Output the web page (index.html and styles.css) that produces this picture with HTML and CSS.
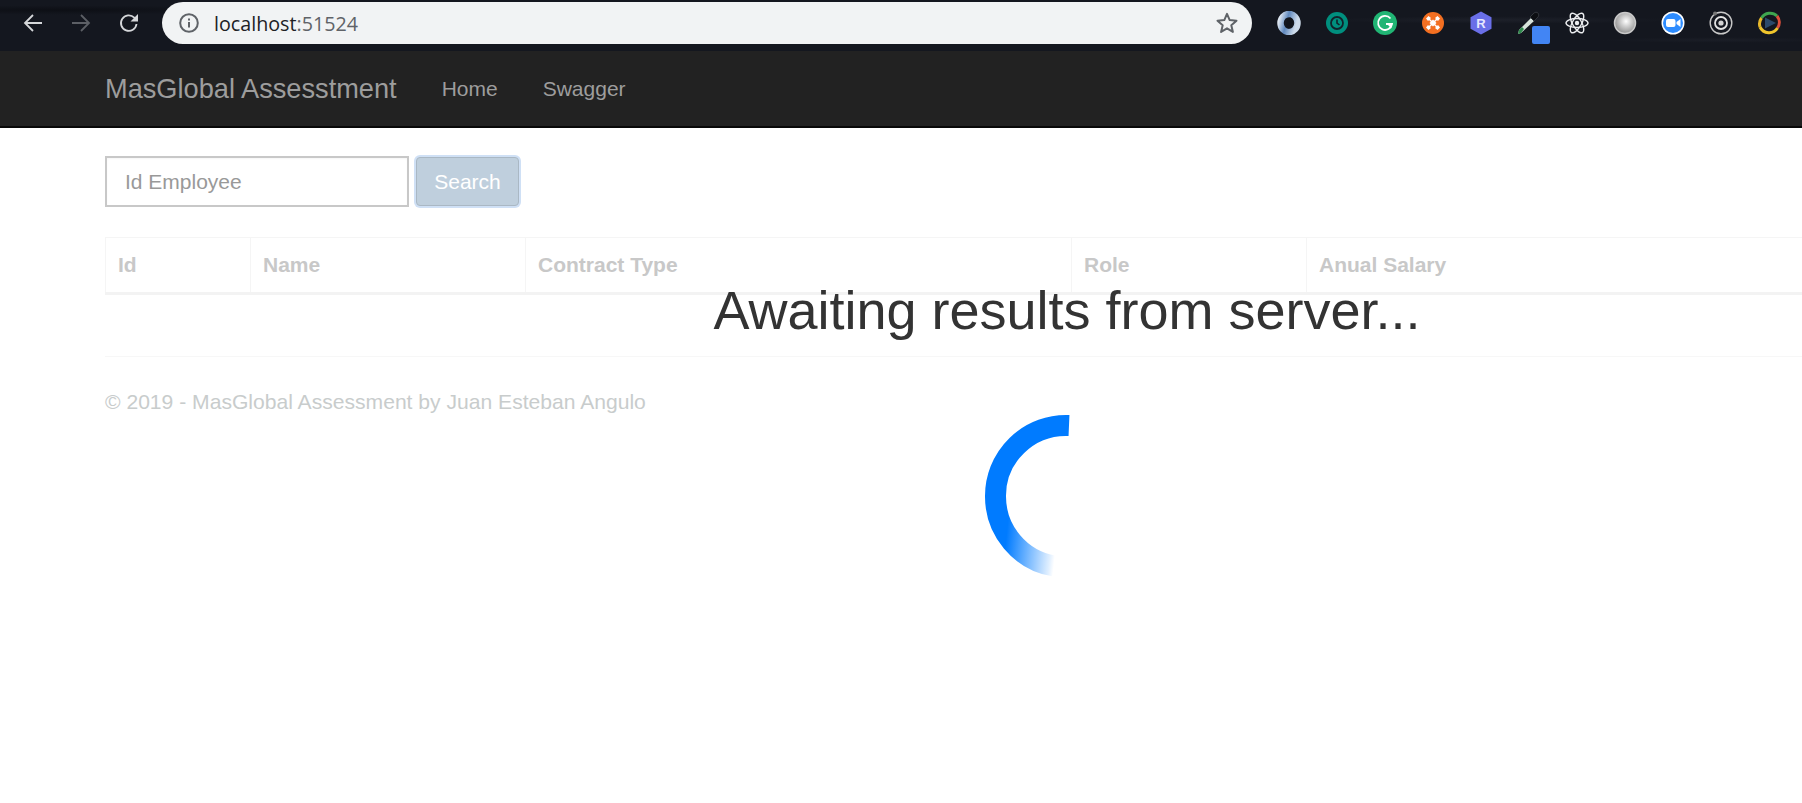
FILE: index.html
```html
<!DOCTYPE html>
<html lang="en">
<head>
<meta charset="utf-8">
<title>MasGlobal Assesstment</title>
<link rel="stylesheet" href="styles.css">
</head>
<body>
<header class="browser">
  <div class="nav-buttons">
    <svg class="tool" viewBox="0 0 24 24"><path d="M21 12H4M12 4l-8 8 8 8" fill="none" stroke="#d5d7da" stroke-width="1.800"/></svg>
    <svg class="tool" viewBox="0 0 24 24"><path d="M3 12h17M12 4l8 8-8 8" fill="none" stroke="#5c5f65" stroke-width="1.800"/></svg>
    <svg class="tool" viewBox="0 0 24 24"><path d="M19.500 13a7.800 7.800 0 1 1-2.200-6.400L20 9.200" fill="none" stroke="#d5d7da" stroke-width="1.800"/><path d="M21 3v7.500h-7.500z" fill="#d5d7da"/></svg>
  </div>
  <div class="omnibox">
    <svg class="info" viewBox="0 0 20 20"><circle cx="10" cy="10" r="8.800" fill="none" stroke="#5f6368" stroke-width="2"/><path d="M9 9h2v5.500H9zM9 5.500h2v2H9z" fill="#5f6368"/></svg>
    <span class="url">localhost<span class="port">:51524</span></span>
    <svg class="star" viewBox="0 0 24 24"><path d="M12 2.800l2.700 6.300 6.800.6-5.200 4.500 1.600 6.700L12 17.300l-5.900 3.600 1.600-6.700L2.500 9.700l6.800-.6z" fill="none" stroke="#5f6368" stroke-width="2" stroke-linejoin="round"/></svg>
  </div>
  <div class="extensions">
    <svg class="ext" viewBox="0 0 24 24"><defs><linearGradient id="jv" x1="0" x2="1" y1="0" y2=".3"><stop offset="0" stop-color="#e0e8f2"/><stop offset=".45" stop-color="#5f88bd"/><stop offset="1" stop-color="#cddbea"/></linearGradient></defs><ellipse cx="12" cy="12" rx="8.500" ry="9" fill="none" stroke="url(#jv)" stroke-width="6.500"/><ellipse cx="12.500" cy="12" rx="3" ry="5.500" fill="#11141b" transform="rotate(12 12.500 12)"/></svg>
    <svg class="ext" viewBox="0 0 24 24"><circle cx="12" cy="12" r="11" fill="#008f7e"/><circle cx="12" cy="12" r="6" fill="none" stroke="#10232b" stroke-width="1.800"/><path d="M12 8.500V12l2.500 2" fill="none" stroke="#10232b" stroke-width="1.600"/></svg>
    <svg class="ext" viewBox="0 0 24 24"><circle cx="12" cy="12" r="12" fill="#20b574"/><path d="M17.500 7.500A7 7 0 1 0 19 13h-6" fill="none" stroke="#fff" stroke-width="1.800"/><path d="M14 13h5l-1 4z" fill="#fff"/></svg>
    <svg class="ext" viewBox="0 0 24 24"><circle cx="12" cy="12" r="11" fill="#f36f21"/><path d="M8 8l8 8M16 8l-8 8" stroke="#fff" stroke-width="1.500"/><path d="M8.500 12L12 8.500 15.500 12 12 15.500z" fill="#fff"/><path d="M5 7.500L7.500 5 10 7l-3 3zM19 7.500L16.500 5 14 7l3 3zM5 16.500L7.500 19 10 17l-3-3zM19 16.500L16.500 19 14 17l3-3z" fill="#fff"/></svg>
    <span class="ext hex"><svg class="hex-shape" viewBox="0 0 24 24"><path d="M12 .5l10.500 5.800v11.400L12 23.500 1.500 17.700V6.300z" fill="#6a6fe8"/></svg><span class="hex-letter">R</span></span>
    <span class="ext dropper"><svg class="dropper-shape" viewBox="0 0 24 24"><path d="M2 23l1-4L15 7l3 3L5 22z" fill="#d8e4dc"/><path d="M2 23l1-4 3-3 2 2-3 4z" fill="#2f8a4c"/><path d="M14 6l4-4c1-1 3-1 4 0s1 3 0 4l-4 4z" fill="#0c0e12" stroke="#30343a"/></svg><span class="swatch"></span></span>
    <svg class="ext" viewBox="0 0 24 24"><g fill="none" stroke="#eceef0" stroke-width="1.400"><ellipse cx="12" cy="12" rx="11" ry="4.500"/><ellipse cx="12" cy="12" rx="11" ry="4.500" transform="rotate(60 12 12)"/><ellipse cx="12" cy="12" rx="11" ry="4.500" transform="rotate(120 12 12)"/></g><circle cx="12" cy="12" r="2.200" fill="#eceef0"/></svg>
    <svg class="ext" viewBox="0 0 24 24"><defs><radialGradient id="pearl" cx=".55" cy=".42" r=".6"><stop offset="0" stop-color="#fff"/><stop offset=".4" stop-color="#d0d0d0"/><stop offset="1" stop-color="#8d8d8d"/></radialGradient></defs><circle cx="12" cy="12" r="10.500" fill="url(#pearl)" stroke="#c9c9c9" stroke-width="1.500"/></svg>
    <svg class="ext" viewBox="0 0 24 24"><circle cx="12" cy="12" r="11.500" fill="#fff"/><circle cx="12" cy="12" r="10" fill="#2d8cff"/><rect x="5" y="8" width="9.500" height="8" rx="2" fill="#fff"/><path d="M15.500 11l4-3v8l-4-3z" fill="#fff"/></svg>
    <svg class="ext" viewBox="0 0 24 24"><circle cx="12" cy="12" r="10.800" fill="none" stroke="#c8c8c8" stroke-width="1.400"/><circle cx="12" cy="12" r="6" fill="none" stroke="#e2e2e2" stroke-width="1.800"/><circle cx="12" cy="12" r="2.600" fill="#d4d4d4"/><circle cx="6" cy="2.500" r="2" fill="#777"/></svg>
    <svg class="ext" viewBox="0 0 24 24"><g fill="none" stroke-width="3"><path d="M4.500 7A10 10 0 0 1 20 5" stroke="#3fa64f"/><path d="M20 5a10 10 0 0 1 .5 12" stroke="#e0503c"/><path d="M20.500 17A10 10 0 0 1 3 16" stroke="#f0c52c"/><path d="M3 16A10 10 0 0 1 4.500 7" stroke="#e8b82b"/></g><path d="M8 6.500L19 12 8 17.500z" fill="#2c4a6b"/></svg>
  </div>
</header>

<nav class="navbar">
  <a class="brand" href="#">MasGlobal Assesstment</a>
  <a class="nav-link" href="#">Home</a>
  <a class="nav-link" href="#">Swagger</a>
</nav>

<main class="content">
  <form class="search">
    <input class="search-input" type="text" placeholder="Id Employee">
    <button class="search-button" type="button">Search</button>
  </form>
  <table class="results">
    <thead>
      <tr>
        <th class="col-id">Id</th>
        <th class="col-name">Name</th>
        <th class="col-contract">Contract Type</th>
        <th class="col-role">Role</th>
        <th>Anual Salary</th>
      </tr>
    </thead>
  </table>
  <hr class="rule">
  <footer class="footer">© 2019 - MasGlobal Assessment by Juan Esteban Angulo</footer>
</main>

<div class="overlay">
  <h1 class="overlay-title">Awaiting results from server...</h1>
  <svg class="spinner" viewBox="0 0 170 170">
    <defs>
      <linearGradient id="fade" gradientUnits="userSpaceOnUse" x1="30" y1="130" x2="80" y2="135">
        <stop offset="0" stop-color="#007bff"/>
        <stop offset=".9" stop-color="#007bff" stop-opacity=".12"/>
        <stop offset="1" stop-color="#007bff" stop-opacity="0"/>
      </linearGradient>
    </defs>
    <path d="M93 15.560A70.500 70.500 0 0 0 19.500 87" fill="none" stroke="#007bff" stroke-width="21"/>
    <path d="M19.500 86A70.500 70.500 0 0 0 78 156" fill="none" stroke="url(#fade)" stroke-width="21"/>
  </svg>
</div>
</body>
</html>
```

FILE: styles.css
```css
* { box-sizing: border-box; }
html, body { margin: 0; padding: 0; }
body {
  width: 1802px;
  height: 803px;
  overflow: hidden;
  position: relative;
  background: #fff;
  font-family: "Liberation Sans", Arial, sans-serif;
  font-size: 21px;
  color: #333;
}

/* browser chrome */
.browser {
  height: 51px;
  display: flex;
  align-items: flex-start;
  background-color: #14171f;
  background-image:
    radial-gradient(ellipse at 1500px 20px, #1d2029 0, transparent 180px),
    radial-gradient(ellipse at 1720px 40px, #1b1e27 0, transparent 120px),
    radial-gradient(ellipse at 60px 10px, #0d0f15 0, transparent 200px);
}
.nav-buttons {
  width: 162px;
  height: 44px;
  padding: 2px 0 0 21px;
  display: flex;
  align-items: center;
  gap: 24px;
}
.tool { width: 24px; height: 24px; flex: none; }
.omnibox {
  margin-top: 2px;
  width: 1090px;
  height: 42px;
  border-radius: 21px;
  background: #f1f3f4;
  display: flex;
  align-items: center;
  padding: 0 13px 0 17px;
}
.info { width: 20px; height: 20px; flex: none; margin-right: 15px; }
.url {
  flex: 1;
  font-family: "Open Sans", "Noto Sans", sans-serif;
  font-size: 19.700px;
  color: #202124;
  white-space: nowrap;
}
.port { color: #5f6368; }
.star { width: 24px; height: 24px; flex: none; }
.extensions {
  margin: 11px 0 0 25px;
  display: flex;
  gap: 24px;
}
.ext { width: 24px; height: 24px; flex: none; display: block; }
.hex { position: relative; }
.hex-shape { width: 24px; height: 24px; display: block; }
.hex-letter {
  position: absolute;
  inset: 0;
  display: flex;
  align-items: center;
  justify-content: center;
  font-size: 13px;
  font-weight: 700;
  color: #e8e9ff;
}
.dropper { position: relative; }
.dropper-shape { width: 24px; height: 24px; display: block; transform: translate(-1px, 0); }
.swatch {
  position: absolute;
  left: 15px;
  top: 15px;
  width: 18px;
  height: 18px;
  border-radius: 2px;
  background: #4285f4;
}

/* navbar */
.navbar {
  height: 77px;
  background: #222;
  border-bottom: 2px solid #080808;
  display: flex;
  align-items: center;
  padding: 0 0 0 105px;
}
.brand {
  color: #9d9d9d;
  font-size: 27.200px;
  text-decoration: none;
  margin-right: 45px;
}
.nav-link {
  color: #9d9d9d;
  font-size: 21px;
  text-decoration: none;
  margin-right: 45px;
}

/* page */
.content { padding: 27px 0 0 105px; }
.search { display: flex; align-items: center; gap: 7px; height: 52px; }
.search-input {
  width: 304px;
  height: 51px;
  border: 2px solid #c8c8c8;
  border-radius: 0;
  background: #fff;
  padding: 2px 18px 0;
  font: 21px "Liberation Sans", Arial, sans-serif;
  outline: none;
  box-shadow: inset 0 1px 2px rgba(0, 0, 0, .04);
}
.search-input::placeholder { color: #999; opacity: 1; }
.search-button {
  width: 103px;
  height: 49px;
  border: 1px solid #aab8c4;
  border-radius: 4px;
  background: #bfcfdd;
  color: #fff;
  font: 21px "Liberation Sans", Arial, sans-serif;
  padding: 2px 0 0;
  box-shadow: 0 0 0 2px #cfe0f5;
}
.results {
  margin-top: 30px;
  width: 100%;
  border-collapse: collapse;
  table-layout: fixed;
  border-top: 1px solid #f5f5f5;
  border-left: 1px solid #f5f5f5;
}
.results th {
  height: 56px;
  padding: 0 12px;
  text-align: left;
  font-size: 21px;
  font-weight: 700;
  color: #c8c8c8;
  border-right: 1px solid #f5f5f5;
  border-bottom: 3px solid #f3f3f3;
}
.results th:last-child { border-right: 0; }
.col-id { width: 145px; }
.col-name { width: 275px; }
.col-contract { width: 546px; }
.col-role { width: 235px; }
.rule {
  margin: 61px 0 0;
  border: 0;
  border-top: 1px solid #f7f7f7;
}
.footer {
  margin-top: 33px;
  color: #c8cccc;
  font-size: 21.100px;
  line-height: 23px;
}

/* loading overlay */
.overlay {
  position: absolute;
  left: 714px;
  top: 279px;
  width: 706px;
  display: flex;
  flex-direction: column;
  align-items: center;
}
.overlay-title {
  margin: 0;
  font-size: 54px;
  font-weight: 400;
  line-height: 62px;
  white-space: nowrap;
  color: #333;
}
.spinner {
  position: absolute;
  left: 262px;
  top: 131px;
  width: 170px;
  height: 170px;
}
```
